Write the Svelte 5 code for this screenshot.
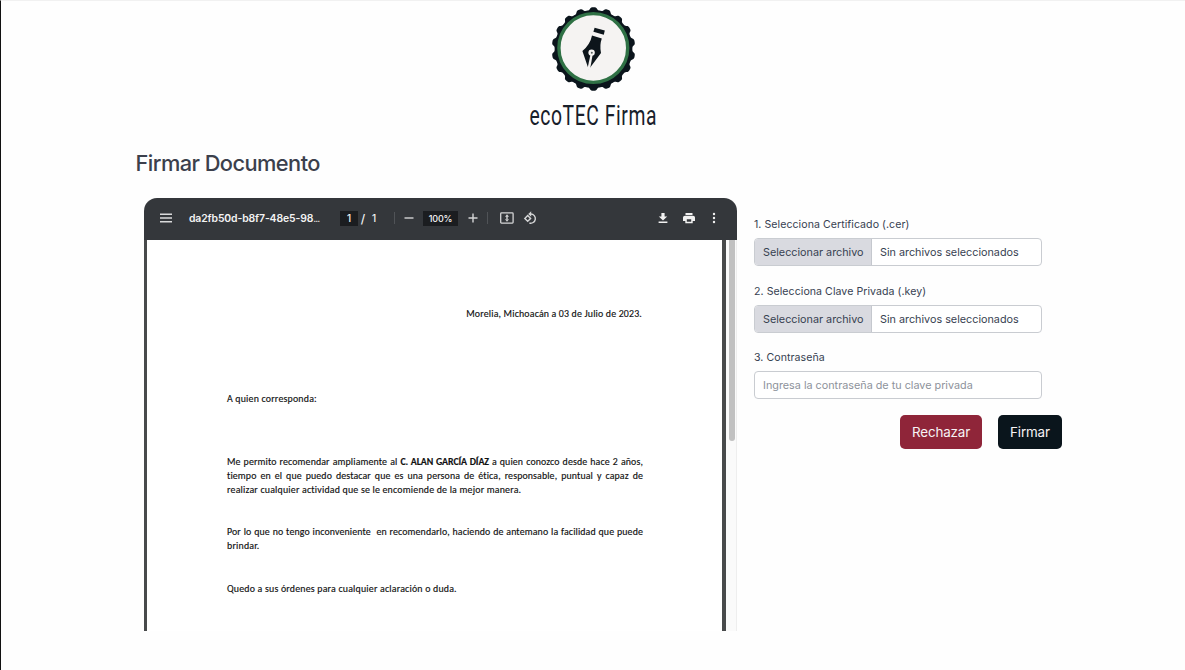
<script>
  const teeth = 18;
  const steps = 360;
  const gear =
    Array.from({ length: steps }, (_, i) => {
      const a = (i / steps) * Math.PI * 2;
      const w = Math.cos(a * teeth);
      const r = 40.3 + 1.5 * Math.tanh(w * 2);
      return `${i ? 'L' : 'M'}${(42.5 + r * Math.sin(a)).toFixed(2)} ${(42 - r * Math.cos(a)).toFixed(2)}`;
    }).join('') + 'Z';

  const files = ['1. Selecciona Certificado (.cer)', '2. Selecciona Clave Privada (.key)'];
</script>

<div class="page">
  <header>
    <svg class="logo" width="85" height="84" viewBox="0 0 85 84">
      <path d={gear} fill="#0b151c" />
      <circle cx="42.3" cy="41" r="34.4" fill="#f5f3f2" stroke="#2f7145" stroke-width="3.4" />
      <g transform="translate(-.6 0)">
        <g fill="#0d151b">
          <path d="M44.2 20.8 L54.4 23.6 L53.4 27.8 L43 24.8Z" />
          <path d="M41.6 28.4 L51.4 31.4 Q49 38 50.6 46 L38.3 62.5 L32 44 Q40 37 41.6 28.4Z" />
        </g>
        <path d="M40.2 47 L36.8 63 L39.6 62.5 L42.4 47Z" fill="#f5f3f2" />
        <circle cx="41.2" cy="45.6" r="3.2" fill="#f5f3f2" />
        <circle cx="41.4" cy="45.8" r="1" fill="#59605f" />
      </g>
    </svg>
    <svg class="brand" width="260" height="36" viewBox="0 0 260 36">
      <text x="66.5" y="26" textLength="127.5" lengthAdjust="spacingAndGlyphs">ecoTEC Firma</text>
    </svg>
  </header>

  <h1>Firmar Documento</h1>

  <main>
    <section class="viewer">
      <div class="toolbar">
        <svg class="menu" width="12" height="10" viewBox="0 0 12 10" stroke="#d9dadb" stroke-width="1.5"><path d="M0 1.2H12M0 5H12M0 8.8H12" /></svg>
        <span class="name">da2fb50d-b8f7-48e5-98<span class="dots">...</span></span>
        <span class="box pagenum">1</span>
        <span class="slash">/</span>
        <span class="total">1</span>
        <i class="sep s1"></i>
        <svg class="minus" width="10" height="10" viewBox="0 0 10 10" stroke="#d4d5d6" stroke-width="1.4"><path d="M.5 5H9.5" /></svg>
        <span class="box zoom">100%</span>
        <svg class="plus" width="10" height="10" viewBox="0 0 10 10" stroke="#d4d5d6" stroke-width="1.4"><path d="M.5 5H9.5M5 .5V9.5" /></svg>
        <i class="sep s2"></i>
        <svg class="fit" width="14" height="12" viewBox="0 0 14 12" fill="none" stroke="#d4d5d6" stroke-width="1.3"><rect x=".7" y=".9" width="12.4" height="10.2" rx=".8" /><path d="M7 2.2L9 4.7H5ZM7 9.8L9 7.3H5ZM6.3 4.5H7.7V7.5H6.3Z" fill="#d4d5d6" stroke="none" /></svg>
        <svg class="rotate" width="14" height="14" viewBox="0 0 14 14" fill="none" stroke="#d4d5d6" stroke-width="1.4"><path d="M4.7 4.5L7.6 7.4L4.7 10.3L1.8 7.4Z" /><path d="M6.6 3H7.8A4.6 4.6 0 1 1 6.4 12" /><path d="M8.2 .3V5.7L5.2 3Z" fill="#d4d5d6" stroke="none" /></svg>
        <svg class="download" width="10" height="12" viewBox="0 0 10 12" fill="#f1f1f1"><path d="M3.4 1H6.6V4.5H9.2L5 8.5L.8 4.5H3.4ZM.6 9.4H9.4V11H.6Z" /></svg>
        <svg class="print" width="12" height="12" viewBox="0 0 12 12" fill="#f1f1f1"><path d="M2.5 1H9.5V3H2.5ZM2 3.7H10Q12 3.7 12 5.6V9H9.7V11.2H2.3V9H0V5.6Q0 3.7 2 3.7ZM3.8 7.2V9.8H8.2V7.2Z" fill-rule="evenodd" /></svg>
        <svg class="more" width="4" height="12" viewBox="0 0 4 12" fill="#f1f1f1"><circle cx="2" cy="2" r="1.2" /><circle cx="2" cy="6" r="1.2" /><circle cx="2" cy="10" r="1.2" /></svg>
      </div>
      <div class="body">
        <article>
          <p class="date line">Morelia, Michoacán a 03 de Julio de 2023.</p>
          <p class="line greet">A quien corresponda:</p>
          <div class="para first">
            <p class="line full">Me permito recomendar ampliamente al <b>C. ALAN GARCÍA DÍAZ</b> a quien conozco desde hace 2 años,</p>
            <p class="line full">tiempo en el que puedo destacar que es una persona de ética, responsable, puntual y capaz de</p>
            <p class="line">realizar cualquier actividad que se le encomiende de la mejor manera.</p>
          </div>
          <div class="para">
            <p class="line full">Por lo que no tengo inconveniente&nbsp; en recomendarlo, haciendo de antemano la facilidad que puede</p>
            <p class="line">brindar.</p>
          </div>
          <p class="line last">Quedo a sus órdenes para cualquier aclaración o duda.</p>
        </article>
        <div class="track"><div class="thumb"></div></div>
      </div>
    </section>

    <form>
      {#each files as label}
        <div class="field">
          <span class="label">{label}</span>
          <div class="file"><span class="pick">Seleccionar archivo</span><span class="none">Sin archivos seleccionados</span></div>
        </div>
      {/each}
      <div class="field">
        <label class="label" for="clave">3. Contraseña</label>
        <input id="clave" type="password" placeholder="Ingresa la contraseña de tu clave privada" />
      </div>
      <div class="actions">
        <button type="button" class="reject">Rechazar</button>
        <button type="button" class="sign">Firmar</button>
      </div>
    </form>
  </main>
</div>

<style>
  :global(body) { margin: 0; background: #fefefe; overflow: hidden; }
  * { box-sizing: border-box; }
  .page { height: 670px; width: 1185px; border-left: 1px solid #111; border-top: 1px solid #f1f1f1; font-family: Inter, sans-serif; color: #374151; overflow: hidden; }
  header { display: flex; flex-direction: column; align-items: center; padding-top: 6px; height: 130px; }
  .logo { flex: none; }
  .brand { flex: none; margin-top: 8px; overflow: visible; }
  .brand text { font: 400 27px Roboto, sans-serif; fill: #18202a; letter-spacing: .8px; }
  h1 { margin: 17px 0 0 134.5px; font-size: 21.8px; line-height: 30px; height: 30px; font-weight: 500; color: #3b404c; letter-spacing: -.55px; white-space: nowrap; }
  main { display: flex; margin: 20px 0 0 143px; }
  .viewer { width: 593px; height: 433px; flex: none; display: flex; flex-direction: column; }
  .toolbar { height: 42px; flex: none; background: #34373b; border-radius: 13px 13px 0 0; display: flex; align-items: center; padding: 0 21px 2px 16px; color: #f3f3f3; font: 500 10px Inter, sans-serif; }
  .toolbar > * { flex: none; }
  .name { margin-left: 17px; width: 151px; font-size: 10.4px; font-weight: 600; letter-spacing: -.11px; white-space: nowrap; }
  .dots { letter-spacing: -1px; font-weight: 400; }
  .box { background: #1b1d20; height: 15px; line-height: 15px; text-align: center; }
  .pagenum { width: 18px; }
  .slash { width: 10px; text-align: center; font-size: 12px; }
  .total { width: 12px; text-align: center; }
  .sep { width: 1px; height: 12px; background: #505357; }
  .s1 { margin: 0 9px 0 14px; }
  .zoom { width: 35px; margin: 0 10px 0 9px; font-size: 9px; letter-spacing: -.2px; }
  .s2 { margin: 0 12px 0 9px; }
  .rotate { margin-left: 9px; }
  .download { margin-left: auto; }
  .print { margin-left: 15px; }
  .more { margin-left: 17px; }
  .body { flex: 1; display: flex; border-left: 3px solid #484a4b; }
  article { width: 579px; flex: none; border-right: 4px solid #484a4b; padding: 68px 80px 0; background: #fff; font-family: Carlito, Lato, sans-serif; color: #111; }
  .line { margin: 0; height: 13.7px; line-height: 13.7px; font-size: 9.9px; font-weight: 500; white-space: nowrap; letter-spacing: .2px; -webkit-text-stroke: .15px #111; }
  .full { width: 416px; text-align-last: justify; letter-spacing: .12px; }
  .full b { letter-spacing: -.1px; }
  .date { text-align: right; letter-spacing: .17px; }
  .greet { margin-top: 71px; }
  .first { margin-top: 50px; }
  .para + .para { margin-top: 29px; }
  .last { margin-top: 29px; }
  .track { flex: 1; background: #fafafa; border-right: 1px solid #eee; padding: 0 1px 0 3px; }
  .thumb { height: 201px; width: 6px; background: #c1c1c1; border-radius: 0 0 3px 3px; }
  form { margin: 18px 0 0 17px; width: 308px; }
  .field { height: 66.5px; width: 288px; }
  .label { display: block; font-size: 10.6px; line-height: 18px; height: 22px; color: #374151; white-space: nowrap; letter-spacing: .05px; }
  .file, input { display: flex; width: 288px; height: 28px; border: 1px solid #c9ccd1; border-radius: 4px; font: 400 10.8px/27px Inter, sans-serif; background: #fff; overflow: hidden; white-space: nowrap; }
  .pick { width: 117px; flex: none; padding-left: 8px; background: #d9dae0; border-right: 1px solid #c5c8ce; }
  .none { padding-left: 8px; }
  input { padding: 0 8px; outline: 0; }
  input::placeholder { color: #8d929b; opacity: 1; }
  .actions { display: flex; justify-content: flex-end; gap: 16px; margin-top: -1px; }
  button { height: 34px; border: 0; border-radius: 5px; color: #f7f3f5; font: 400 13.4px Inter, sans-serif; letter-spacing: -.15px; padding: 0; }
  .reject { width: 82px; background: #8f2539; }
  .sign { width: 64px; background: #0a151c; }
</style>
